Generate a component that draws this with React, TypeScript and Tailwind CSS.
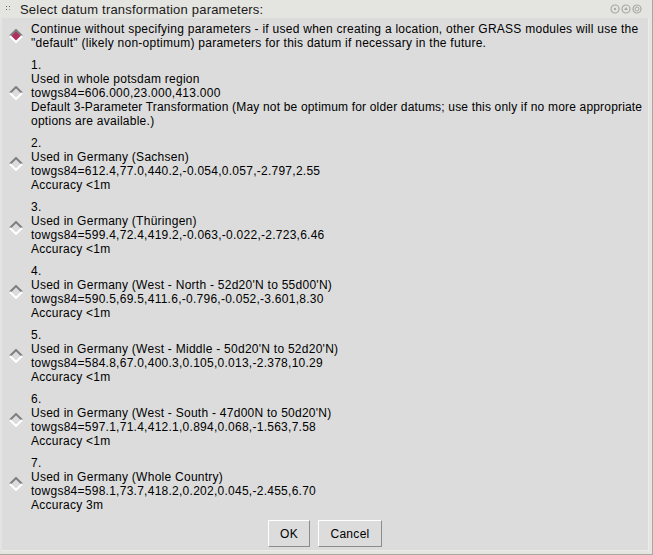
import React, { useState } from 'react'

type Line = { t: string; tight?: boolean }

const items: Line[][] = [
  [
    { t: 'Continue without specifying parameters - if used when creating a location, other GRASS modules will use the' },
    { t: '"default" (likely non-optimum) parameters for this datum if necessary in the future.' },
  ],
  [
    { t: '1.' },
    { t: 'Used in whole potsdam region' },
    { t: 'towgs84=606.000,23.000,413.000' },
    {
      t: 'Default 3-Parameter Transformation (May not be optimum for older datums; use this only if no more appropriate',
      tight: true,
    },
    { t: 'options are available.)' },
  ],
  [
    { t: '2.' },
    { t: 'Used in Germany (Sachsen)' },
    { t: 'towgs84=612.4,77.0,440.2,-0.054,0.057,-2.797,2.55' },
    { t: 'Accuracy <1m' },
  ],
  [
    { t: '3.' },
    { t: 'Used in Germany (Thüringen)' },
    { t: 'towgs84=599.4,72.4,419.2,-0.063,-0.022,-2.723,6.46' },
    { t: 'Accuracy <1m' },
  ],
  [
    { t: '4.' },
    { t: "Used in Germany (West - North - 52d20'N to 55d00'N)" },
    { t: 'towgs84=590.5,69.5,411.6,-0.796,-0.052,-3.601,8.30' },
    { t: 'Accuracy <1m' },
  ],
  [
    { t: '5.' },
    { t: "Used in Germany (West - Middle - 50d20'N to 52d20'N)" },
    { t: 'towgs84=584.8,67.0,400.3,0.105,0.013,-2.378,10.29' },
    { t: 'Accuracy <1m' },
  ],
  [
    { t: '6.' },
    { t: "Used in Germany (West - South - 47d00N to 50d20'N)" },
    { t: 'towgs84=597.1,71.4,412.1,0.894,0.068,-1.563,7.58' },
    { t: 'Accuracy <1m' },
  ],
  [
    { t: '7.' },
    { t: 'Used in Germany (Whole Country)' },
    { t: 'towgs84=598.1,73.7,418.2,0.202,0.045,-2.455,6.70' },
    { t: 'Accuracy 3m' },
  ],
]

function Diamond({ on }: { on: boolean }) {
  return (
    <svg width="14" height="14" viewBox="0 0 14 14" className="shrink-0">
      <polygon points="7,1 13,7 7,13 1,7" fill={on ? '#b03060' : '#dcdcdc'} />
      <polyline points="1,7 7,1 13,7" fill="none" stroke="#7f7f7f" strokeWidth="2" />
      <polyline points="1,7 7,13 13,7" fill="none" stroke="#ffffff" strokeWidth="2" />
    </svg>
  )
}

function TkButton({ label, width }: { label: string; width: string }) {
  return (
    <button
      className={`${width} h-[27px] bg-[#dcdcdc] border border-t-white border-l-white border-b-[#8c8c8c] border-r-[#8c8c8c] text-[12px] tracking-[0.3px] text-black`}
    >
      {label}
    </button>
  )
}

export default function App() {
  const [sel, setSel] = useState(0)

  return (
    <div
      className="w-[653px] h-[555px] bg-[#e4e4e0] flex flex-col border-r border-b border-[#a8a8a0] overflow-hidden"
      style={{ fontFamily: '"Liberation Sans", Arial, sans-serif' }}
    >
      {/* Title bar */}
      <div className="h-[18px] flex items-center shrink-0">
        <svg width="10" height="10" viewBox="0 0 10 10" className="ml-[4px]">
          <rect x="2" y="2" width="1" height="1" fill="#666" />
          <rect x="2" y="5" width="1" height="1" fill="#666" />
          <rect x="5" y="2" width="1" height="1" fill="#666" />
          <rect x="5" y="5" width="1" height="1" fill="#999" />
        </svg>
        <span className="ml-[6px] text-[13px] tracking-[0.2px] text-[#1a1a1a] leading-none">
          Select datum transformation parameters:
        </span>
        <div className="ml-auto mr-[10px] flex gap-[1px]">
          <svg width="10" height="10" viewBox="0 0 10 10">
            <circle cx="5" cy="5" r="4" fill="none" stroke="#a8a8a4" strokeWidth="1.2" />
            <circle cx="5" cy="5" r="1.2" fill="#a8a8a4" />
          </svg>
          <svg width="10" height="10" viewBox="0 0 10 10">
            <circle cx="5" cy="5" r="4" fill="none" stroke="#a8a8a4" strokeWidth="1.2" />
            <polygon points="5,3 7,6 3,6" fill="#a8a8a4" />
          </svg>
          <svg width="10" height="10" viewBox="0 0 10 10">
            <circle cx="5" cy="5" r="4" fill="none" stroke="#a8a8a4" strokeWidth="1.2" />
            <circle cx="5" cy="5" r="2" fill="none" stroke="#a8a8a4" strokeWidth="1" />
          </svg>
        </div>
      </div>

      {/* Content */}
      <div className="flex-1 ml-[2px] mr-[3px] mb-[3px] bg-[#dcdcdc] border-b border-r border-[#ececea] flex flex-col text-[12px] leading-[14px] tracking-[0.26px] text-black overflow-hidden">
        <div className="flex flex-col gap-[8px] pt-[4px]">
          {items.map((lines, i) => (
            <div key={i} className="flex items-center cursor-default" onClick={() => setSel(i)}>
              <div className="w-[29px] shrink-0 pl-[7px] flex">
                <Diamond on={sel === i} />
              </div>
              <div className="flex flex-col whitespace-nowrap">
                {lines.map((l, j) => (
                  <span key={j} className={l.tight ? 'tracking-[0.18px]' : ''}>
                    {l.t}
                  </span>
                ))}
              </div>
            </div>
          ))}
        </div>
        <div className="flex justify-center gap-[8px] mt-[8px]">
          <TkButton label="OK" width="w-[42px]" />
          <TkButton label="Cancel" width="w-[64px]" />
        </div>
      </div>
    </div>
  )
}
